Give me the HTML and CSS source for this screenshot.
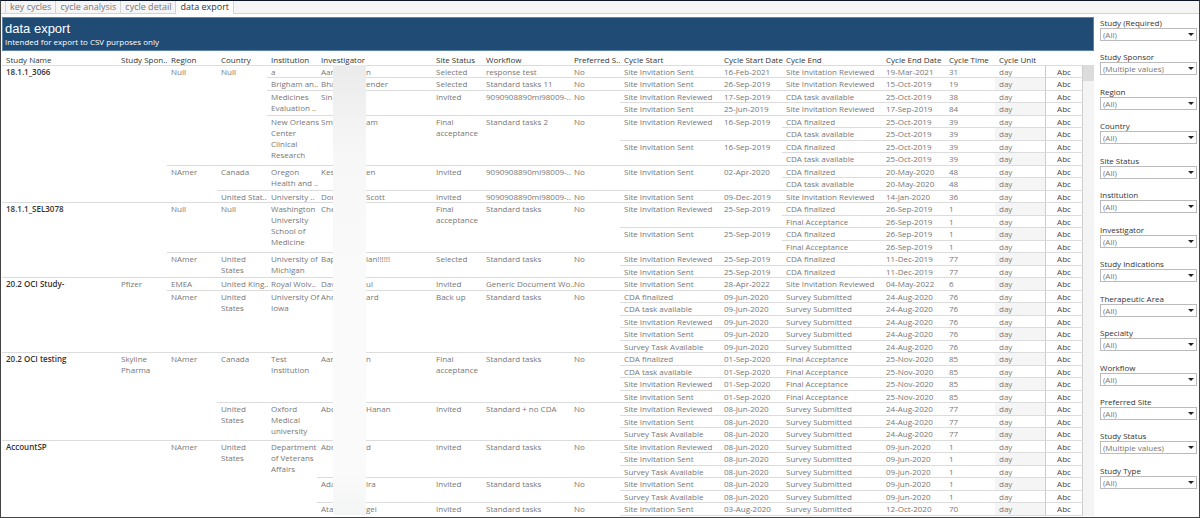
FILE: index.html
```
<!DOCTYPE html>
<html lang="en">

<head>
    <meta charset="UTF-8">
    <meta name="viewport" content="width=device-width,initial-scale=1" />
    <title>data export</title>
    <link rel="stylesheet" href="styles.css">
</head>

<body>
    <nav class="tabs">
        <a href="#">key cycles</a>
        <a href="#">cycle analysis</a>
        <a href="#">cycle detail</a>
        <a href="#" class="active">data export</a>
    </nav>

    <div class="dashboard">
        <main class="report">
            <header class="title">
                <h1>data export</h1>
                <p>Intended for export to CSV purposes only</p>
            </header>

            <div class="sheet">
                <table>
                    <colgroup>
                        <col class="w-wide"><col class="w-50"><col class="w-50"><col class="w-50"><col class="w-50">
                        <col><col class="w-50"><col class="w-88"><col class="w-50"><col class="w-100">
                        <col class="w-62"><col class="w-100"><col class="w-63"><col class="w-50"><col class="w-50">
                        <col class="w-38">
                    </colgroup>
                    <thead>
                        <tr>
                            <th>Study Name</th>
                            <th>Study Spon..</th>
                            <th>Region</th>
                            <th>Country</th>
                            <th>Institution</th>
                            <th class="masked">Investigator<div class="mask"></div></th>
                            <th>Site Status</th>
                            <th>Workflow</th>
                            <th>Preferred S..</th>
                            <th>Cycle Start</th>
                            <th>Cycle Start Date</th>
                            <th>Cycle End</th>
                            <th>Cycle End Date</th>
                            <th>Cycle Time</th>
                            <th>Cycle Unit</th>
                            <th></th>
                        </tr>
                    </thead>
                    <tbody>
                        <!-- 18.1.1_3066 -->
                        <tr><th rowspan="11">18.1.1_3066</th><td rowspan="11"></td><td rowspan="8">Null</td><td rowspan="8">Null</td><td>a</td><td><span class="first">Aar</span>n</td><td>Selected</td><td>response test</td><td>No</td><td>Site Invitation Sent</td><td>16-Feb-2021</td><td>Site Invitation Reviewed</td><td>19-Mar-2021</td><td>31</td><td class="unit">day</td><td class="abc">Abc</td></tr>
                        <tr><td>Brigham an..</td><td><span class="first">Bha</span>ender</td><td>Selected</td><td>Standard tasks 11</td><td>No</td><td>Site Invitation Sent</td><td>26-Sep-2019</td><td>Site Invitation Reviewed</td><td>15-Oct-2019</td><td>19</td><td class="unit">day</td><td class="abc">Abc</td></tr>
                        <tr><td rowspan="2">Medicines<br>Evaluation ..</td><td rowspan="2"><span class="first">Sin</span></td><td rowspan="2">Invited</td><td rowspan="2">9090908890mi98009-..</td><td rowspan="2">No</td><td>Site Invitation Reviewed</td><td>17-Sep-2019</td><td>CDA task available</td><td>25-Oct-2019</td><td>38</td><td class="unit">day</td><td class="abc">Abc</td></tr>
                        <tr><td>Site Invitation Sent</td><td>25-Jun-2019</td><td>Site Invitation Reviewed</td><td>17-Sep-2019</td><td>84</td><td class="unit">day</td><td class="abc">Abc</td></tr>
                        <tr><td rowspan="4">New Orleans<br>Center<br>Clinical<br>Research</td><td rowspan="4"><span class="first">Smi</span>am</td><td rowspan="4">Final<br>acceptance</td><td rowspan="4">Standard tasks 2</td><td rowspan="4">No</td><td rowspan="2">Site Invitation Reviewed</td><td rowspan="2">16-Sep-2019</td><td>CDA finalized</td><td>25-Oct-2019</td><td>39</td><td class="unit">day</td><td class="abc">Abc</td></tr>
                        <tr><td>CDA task available</td><td>25-Oct-2019</td><td>39</td><td class="unit">day</td><td class="abc">Abc</td></tr>
                        <tr><td rowspan="2">Site Invitation Sent</td><td rowspan="2">16-Sep-2019</td><td>CDA finalized</td><td>25-Oct-2019</td><td>39</td><td class="unit">day</td><td class="abc">Abc</td></tr>
                        <tr><td>CDA task available</td><td>25-Oct-2019</td><td>39</td><td class="unit">day</td><td class="abc">Abc</td></tr>
                        <tr><td rowspan="3">NAmer</td><td rowspan="2">Canada</td><td rowspan="2">Oregon<br>Health and ..</td><td rowspan="2"><span class="first">Kes</span>en</td><td rowspan="2">Invited</td><td rowspan="2">9090908890mi98009-..</td><td rowspan="2">No</td><td rowspan="2">Site Invitation Sent</td><td rowspan="2">02-Apr-2020</td><td>CDA finalized</td><td>20-May-2020</td><td>48</td><td class="unit">day</td><td class="abc">Abc</td></tr>
                        <tr><td>CDA task available</td><td>20-May-2020</td><td>48</td><td class="unit">day</td><td class="abc">Abc</td></tr>
                        <tr><td>United Stat..</td><td>University ..</td><td><span class="first">Dor</span>Scott</td><td>Invited</td><td>9090908890mi98009-..</td><td>No</td><td>Site Invitation Sent</td><td>09-Dec-2019</td><td>Site Invitation Reviewed</td><td>14-Jan-2020</td><td>36</td><td class="unit">day</td><td class="abc">Abc</td></tr>

                        <!-- 18.1.1_SEL3078 -->
                        <tr><th rowspan="6">18.1.1_SEL3078</th><td rowspan="6"></td><td rowspan="4">Null</td><td rowspan="4">Null</td><td rowspan="4">Washington<br>University<br>School of<br>Medicine</td><td rowspan="4"><span class="first">Che</span></td><td rowspan="4">Final<br>acceptance</td><td rowspan="4">Standard tasks</td><td rowspan="4">No</td><td rowspan="2">Site Invitation Reviewed</td><td rowspan="2">25-Sep-2019</td><td>CDA finalized</td><td>26-Sep-2019</td><td>1</td><td class="unit">day</td><td class="abc">Abc</td></tr>
                        <tr><td>Final Acceptance</td><td>26-Sep-2019</td><td>1</td><td class="unit">day</td><td class="abc">Abc</td></tr>
                        <tr><td rowspan="2">Site Invitation Sent</td><td rowspan="2">25-Sep-2019</td><td>CDA finalized</td><td>26-Sep-2019</td><td>1</td><td class="unit">day</td><td class="abc">Abc</td></tr>
                        <tr><td>Final Acceptance</td><td>26-Sep-2019</td><td>1</td><td class="unit">day</td><td class="abc">Abc</td></tr>
                        <tr><td rowspan="2">NAmer</td><td rowspan="2">United<br>States</td><td rowspan="2">University of<br>Michigan</td><td rowspan="2"><span class="first">Bap</span>lan!!!!!!</td><td rowspan="2">Selected</td><td rowspan="2">Standard tasks</td><td rowspan="2">No</td><td>Site Invitation Reviewed</td><td>25-Sep-2019</td><td>CDA finalized</td><td>11-Dec-2019</td><td>77</td><td class="unit">day</td><td class="abc">Abc</td></tr>
                        <tr><td>Site Invitation Sent</td><td>25-Sep-2019</td><td>CDA finalized</td><td>11-Dec-2019</td><td>77</td><td class="unit">day</td><td class="abc">Abc</td></tr>

                        <!-- 20.2 OCI Study- -->
                        <tr><th rowspan="6">20.2 OCI Study-</th><td rowspan="6">Pfizer</td><td>EMEA</td><td>United King..</td><td>Royal Wolv..</td><td><span class="first">Dav</span>ul</td><td>Invited</td><td>Generic Document Wo..</td><td>No</td><td>Site Invitation Sent</td><td>28-Apr-2022</td><td>Site Invitation Reviewed</td><td>04-May-2022</td><td>6</td><td class="unit">day</td><td class="abc">Abc</td></tr>
                        <tr><td rowspan="5">NAmer</td><td rowspan="5">United<br>States</td><td rowspan="5">University Of<br>Iowa</td><td rowspan="5"><span class="first">Ahr</span>ard</td><td rowspan="5">Back up</td><td rowspan="5">Standard tasks</td><td rowspan="5">No</td><td>CDA finalized</td><td>09-Jun-2020</td><td>Survey Submitted</td><td>24-Aug-2020</td><td>76</td><td class="unit">day</td><td class="abc">Abc</td></tr>
                        <tr><td>CDA task available</td><td>09-Jun-2020</td><td>Survey Submitted</td><td>24-Aug-2020</td><td>76</td><td class="unit">day</td><td class="abc">Abc</td></tr>
                        <tr><td>Site Invitation Reviewed</td><td>09-Jun-2020</td><td>Survey Submitted</td><td>24-Aug-2020</td><td>76</td><td class="unit">day</td><td class="abc">Abc</td></tr>
                        <tr><td>Site Invitation Sent</td><td>09-Jun-2020</td><td>Survey Submitted</td><td>24-Aug-2020</td><td>76</td><td class="unit">day</td><td class="abc">Abc</td></tr>
                        <tr><td>Survey Task Available</td><td>09-Jun-2020</td><td>Survey Submitted</td><td>24-Aug-2020</td><td>76</td><td class="unit">day</td><td class="abc">Abc</td></tr>

                        <!-- 20.2 OCI testing -->
                        <tr><th rowspan="7">20.2 OCI testing</th><td rowspan="7">Skyline<br>Pharma</td><td rowspan="7">NAmer</td><td rowspan="4">Canada</td><td rowspan="4">Test<br>Institution</td><td rowspan="4"><span class="first">Aar</span>n</td><td rowspan="4">Final<br>acceptance</td><td rowspan="4">Standard tasks</td><td rowspan="4">No</td><td>CDA finalized</td><td>01-Sep-2020</td><td>Final Acceptance</td><td>25-Nov-2020</td><td>85</td><td class="unit">day</td><td class="abc">Abc</td></tr>
                        <tr><td>CDA task available</td><td>01-Sep-2020</td><td>Final Acceptance</td><td>25-Nov-2020</td><td>85</td><td class="unit">day</td><td class="abc">Abc</td></tr>
                        <tr><td>Site Invitation Reviewed</td><td>01-Sep-2020</td><td>Final Acceptance</td><td>25-Nov-2020</td><td>85</td><td class="unit">day</td><td class="abc">Abc</td></tr>
                        <tr><td>Site Invitation Sent</td><td>01-Sep-2020</td><td>Final Acceptance</td><td>25-Nov-2020</td><td>85</td><td class="unit">day</td><td class="abc">Abc</td></tr>
                        <tr><td rowspan="3">United<br>States</td><td rowspan="3">Oxford<br>Medical<br>university</td><td rowspan="3"><span class="first">Abd</span>Hanan</td><td rowspan="3">Invited</td><td rowspan="3">Standard + no CDA</td><td rowspan="3">No</td><td>Site Invitation Reviewed</td><td>08-Jun-2020</td><td>Survey Submitted</td><td>24-Aug-2020</td><td>77</td><td class="unit">day</td><td class="abc">Abc</td></tr>
                        <tr><td>Site Invitation Sent</td><td>08-Jun-2020</td><td>Survey Submitted</td><td>24-Aug-2020</td><td>77</td><td class="unit">day</td><td class="abc">Abc</td></tr>
                        <tr><td>Survey Task Available</td><td>08-Jun-2020</td><td>Survey Submitted</td><td>24-Aug-2020</td><td>77</td><td class="unit">day</td><td class="abc">Abc</td></tr>

                        <!-- AccountSP, goes on below the fold -->
                        <tr><th class="open" rowspan="6">AccountSP</th><td class="open" rowspan="6"></td><td class="open" rowspan="6">NAmer</td><td class="open" rowspan="6">United<br>States</td><td class="open" rowspan="6">Department<br>of Veterans<br>Affairs</td><td rowspan="3"><span class="first">Abr</span>d</td><td rowspan="3">Invited</td><td rowspan="3">Standard tasks</td><td rowspan="3">No</td><td>Site Invitation Reviewed</td><td>08-Jun-2020</td><td>Survey Submitted</td><td>09-Jun-2020</td><td>1</td><td class="unit">day</td><td class="abc">Abc</td></tr>
                        <tr><td>Site Invitation Sent</td><td>08-Jun-2020</td><td>Survey Submitted</td><td>09-Jun-2020</td><td>1</td><td class="unit">day</td><td class="abc">Abc</td></tr>
                        <tr><td>Survey Task Available</td><td>08-Jun-2020</td><td>Survey Submitted</td><td>09-Jun-2020</td><td>1</td><td class="unit">day</td><td class="abc">Abc</td></tr>
                        <tr><td rowspan="2"><span class="first">Ada</span>lra</td><td rowspan="2">Invited</td><td rowspan="2">Standard tasks</td><td rowspan="2">No</td><td>Site Invitation Sent</td><td>08-Jun-2020</td><td>Survey Submitted</td><td>09-Jun-2020</td><td>1</td><td class="unit">day</td><td class="abc">Abc</td></tr>
                        <tr><td>Survey Task Available</td><td>08-Jun-2020</td><td>Survey Submitted</td><td>09-Jun-2020</td><td>1</td><td class="unit">day</td><td class="abc">Abc</td></tr>
                        <tr><td class="open"><span class="first">Ata</span>gei</td><td class="open">Invited</td><td class="open">Standard tasks</td><td class="open">No</td><td>Site Invitation Sent</td><td>03-Aug-2020</td><td>Survey Submitted</td><td>12-Oct-2020</td><td>70</td><td class="unit">day</td><td class="abc">Abc</td></tr>
                    </tbody>
                </table>
                <div class="scrollbar"><div class="thumb"></div></div>
            </div>
        </main>

        <aside class="filters">
            <div class="filter"><label for="study">Study (Required)</label><div class="select"><select id="study"><option>(All)</option></select></div></div>
            <div class="filter"><label for="sponsor">Study Sponsor</label><div class="select"><select id="sponsor"><option>(Multiple values)</option></select></div></div>
            <div class="filter"><label for="region">Region</label><div class="select"><select id="region"><option>(All)</option></select></div></div>
            <div class="filter"><label for="country">Country</label><div class="select"><select id="country"><option>(All)</option></select></div></div>
            <div class="filter"><label for="site-status">Site Status</label><div class="select"><select id="site-status"><option>(All)</option></select></div></div>
            <div class="filter"><label for="institution">Institution</label><div class="select"><select id="institution"><option>(All)</option></select></div></div>
            <div class="filter"><label for="investigator">Investigator</label><div class="select"><select id="investigator"><option>(All)</option></select></div></div>
            <div class="filter"><label for="indications">Study Indications</label><div class="select"><select id="indications"><option>(All)</option></select></div></div>
            <div class="filter"><label for="area">Therapeutic Area</label><div class="select"><select id="area"><option>(All)</option></select></div></div>
            <div class="filter"><label for="specialty">Specialty</label><div class="select"><select id="specialty"><option>(All)</option></select></div></div>
            <div class="filter"><label for="workflow">Workflow</label><div class="select"><select id="workflow"><option>(All)</option></select></div></div>
            <div class="filter"><label for="preferred">Preferred Site</label><div class="select"><select id="preferred"><option>(All)</option></select></div></div>
            <div class="filter"><label for="study-status">Study Status</label><div class="select"><select id="study-status"><option>(Multiple values)</option></select></div></div>
            <div class="filter"><label for="study-type">Study Type</label><div class="select"><select id="study-type"><option>(All)</option></select></div></div>
        </aside>
    </div>
</body>

</html>
```
FILE: styles.css
```
* {
    box-sizing: border-box;
}

body {
    display: flex;
    flex-direction: column;
    min-height: 100vh;
    margin: 0;
    border: 1px solid #444;
    border-top-color: #0a1526;
    background: white;
    color: #777;
    font: 8px/11px "Open Sans", "Noto Sans", sans-serif;
}

.tabs {
    display: flex;
    height: 13px;
    padding-left: 4px;
    background: #f5f5f5;
    border-bottom: 1px solid #d4d4d4;
}

.tabs a {
    height: 13px;
    padding: 0 4px;
    border-left: 1px solid #d4d4d4;
    color: #777;
    font-size: 9px;
    line-height: 12px;
    text-decoration: none;
}

.tabs .active {
    border-right: 1px solid #d4d4d4;
    background: white;
    color: #333;
}

.dashboard {
    display: flex;
    flex: 1;
}

.report {
    flex: 1;
    min-width: 0;
    padding: 3px 0 1px 1px;
}

.title {
    height: 34px;
    padding: 4px 2px 0;
    border: 1px solid #5d83a8;
    background: #1f4b75;
    color: white;
}

.title h1 {
    margin: 0;
    font: 13px/14px "Liberation Sans", Arial, sans-serif;
}

.title p {
    margin: 0;
}

.sheet {
    display: flex;
}

table {
    flex: 1;
    table-layout: fixed;
    width: 100%;
    border-collapse: separate;
    border-spacing: 0;
}

.w-wide { width: 115px; }
.w-38 { width: 38px; }
.w-50 { width: 50px; }
.w-62 { width: 62px; }
.w-63 { width: 63px; }
.w-88 { width: 88px; }
.w-100 { width: 100px; }

th,
td {
    padding: 0 0 0 4px;
    border-bottom: 1px solid #dcdcdc;
    text-align: left;
    vertical-align: top;
    white-space: nowrap;
}

th {
    color: #333;
    font-weight: 600;
}

thead th {
    height: 15px;
    padding-top: 3px;
    font-weight: 500;
}

tbody tr {
    height: 12px;
}

tbody tr:nth-child(even) {
    height: 13px;
}

tbody tr:nth-child(even) .unit {
    background: #f5f5f5;
}

td.abc {
    padding: 0;
    border-left: 1px solid #ccc;
    border-right: 1px solid #ccc;
    color: #444;
    text-align: center;
}

.open {
    border-bottom-color: transparent;
}

/* covers the middle of the investigator names */
.masked {
    position: relative;
}

.mask {
    position: absolute;
    top: 100%;
    left: 16px;
    width: 33px;
    height: 450px;
    background: linear-gradient(#ebebeb, #f7f7f7 20%, #fafafa 50%, #fafafa 90%, #f4f5f5);
}

.first {
    display: inline-block;
    width: 45px;
    vertical-align: top;
}

.scrollbar {
    width: 11px;
    margin-top: 14px;
    background: #f4f4f4;
}

.thumb {
    height: 16px;
    background: #dcdcdc;
}

.filters {
    display: flex;
    flex-direction: column;
    justify-content: space-between;
    width: 105px;
    padding: 3px 2px 28px 6px;
}

.filter label {
    display: block;
    color: #333;
}

.select {
    position: relative;
}

.select::after {
    content: "";
    position: absolute;
    top: 5px;
    right: 3px;
    border: 3px solid transparent;
    border-top-color: #222;
    border-bottom: 0;
    pointer-events: none;
}

select {
    display: block;
    appearance: none;
    width: 100%;
    height: 13px;
    padding: 0 2px;
    border: 1px solid #bbb;
    border-radius: 0;
    background: white;
    color: #777;
    font: inherit;
}
```
